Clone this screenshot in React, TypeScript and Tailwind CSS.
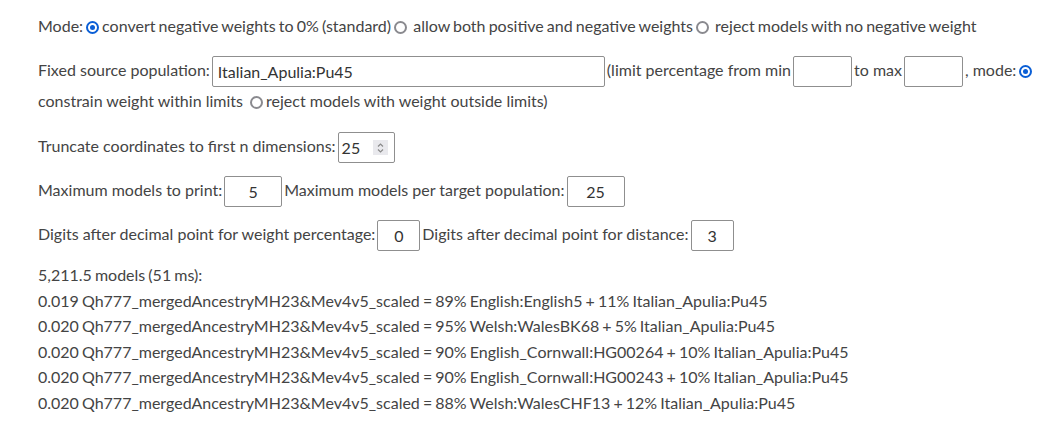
import React from 'react';

const results = [
  '0.019 Qh777_mergedAncestryMH23&Mev4v5_scaled = 89% English:English5 + 11% Italian_Apulia:Pu45',
  '0.020 Qh777_mergedAncestryMH23&Mev4v5_scaled = 95% Welsh:WalesBK68 + 5% Italian_Apulia:Pu45',
  '0.020 Qh777_mergedAncestryMH23&Mev4v5_scaled = 90% English_Cornwall:HG00264 + 10% Italian_Apulia:Pu45',
  '0.020 Qh777_mergedAncestryMH23&Mev4v5_scaled = 90% English_Cornwall:HG00243 + 10% Italian_Apulia:Pu45',
  '0.020 Qh777_mergedAncestryMH23&Mev4v5_scaled = 88% Welsh:WalesCHF13 + 12% Italian_Apulia:Pu45',
];

function Radio({ checked }: { checked?: boolean }) {
  return (
    <span
      className={
        'inline-block align-[-2px] w-[13px] h-[13px] rounded-full border-2 box-border mx-[3px] ' +
        (checked ? 'border-[#0b5fd6] bg-white' : 'border-[#8a8a8f] bg-white')
      }
    >
      {checked && <span className="block w-[5px] h-[5px] rounded-full bg-[#0b5fd6] m-[2px]" />}
    </span>
  );
}

function Box({ value, w, center }: { value: string; w: string; center?: boolean }) {
  return (
    <span
      className={
        'inline-block align-middle h-[31px] leading-[29px] border border-[#8f8f8f] rounded-[2px] px-[5px] text-[#333] bg-white ' +
        w +
        (center ? ' text-center' : '')
      }
    >
      {value}
    </span>
  );
}

export default function App() {
  return (
    <div className="min-h-screen bg-white text-[#444] text-[16px] leading-[25.6px] pl-[38px] pr-[20px] pt-[13px] whitespace-nowrap" style={{ fontFamily: 'Lato, "Open Sans", sans-serif' }}>
      <div className="mb-[17px] [word-spacing:-1px]">
        Mode:
        <Radio checked />convert negative weights to 0% (standard)
        <Radio /> allow both positive and negative weights
        <Radio /> reject models with no negative weight
      </div>

      <div className="mb-[17px] leading-[28px]">
        Fixed source population:
        <Box value="Italian_Apulia:Pu45" w="w-[393px] text-left mx-[2px]" />
        (limit percentage from min
        <Box value="" w="w-[59px] mx-[2px]" />
        to max
        <Box value="" w="w-[59px] mx-[2px]" />
        , mode:
        <Radio checked />
        <br />
        constrain weight within limits <Radio />reject models with weight outside limits)
      </div>

      <div className="mb-[13px]">
        Truncate coordinates to first n dimensions:
        <span className="inline-block align-middle h-[31px] w-[57px] ml-[2px] border border-[#8f8f8f] rounded-[2px] bg-white relative text-[#333] leading-[29px] pl-[3px]">
          25
          <span className="absolute right-[6px] top-[7px] w-[15px] h-[15px] bg-[#e9e9ed] flex flex-col items-center justify-center">
            <svg width="9" height="12" viewBox="0 0 9 12" fill="none" stroke="#8a8a8a" strokeWidth="1.2">
              <path d="M2 4.5 L4.5 2 L7 4.5" />
              <path d="M2 7.5 L4.5 10 L7 7.5" />
            </svg>
          </span>
        </span>
      </div>

      <div className="mb-[13px]">
        Maximum models to print:
        <Box value="5" w="w-[58px] mx-[2px]" center />
        Maximum models per target population:
        <Box value="25" w="w-[58px] mx-[2px]" center />
      </div>

      <div className="mb-[11px]">
        Digits after decimal point for weight percentage:
        <Box value="0" w="w-[43px] mx-[2px]" center />
        Digits after decimal point for distance:
        <Box value="3" w="w-[43px] mx-[2px]" center />
      </div>

      <div className="[word-spacing:-1px]">
        <div>5,211.5 models (51 ms):</div>
        {results.map((r, i) => (
          <div key={i}>{r}</div>
        ))}
      </div>
    </div>
  );
}
